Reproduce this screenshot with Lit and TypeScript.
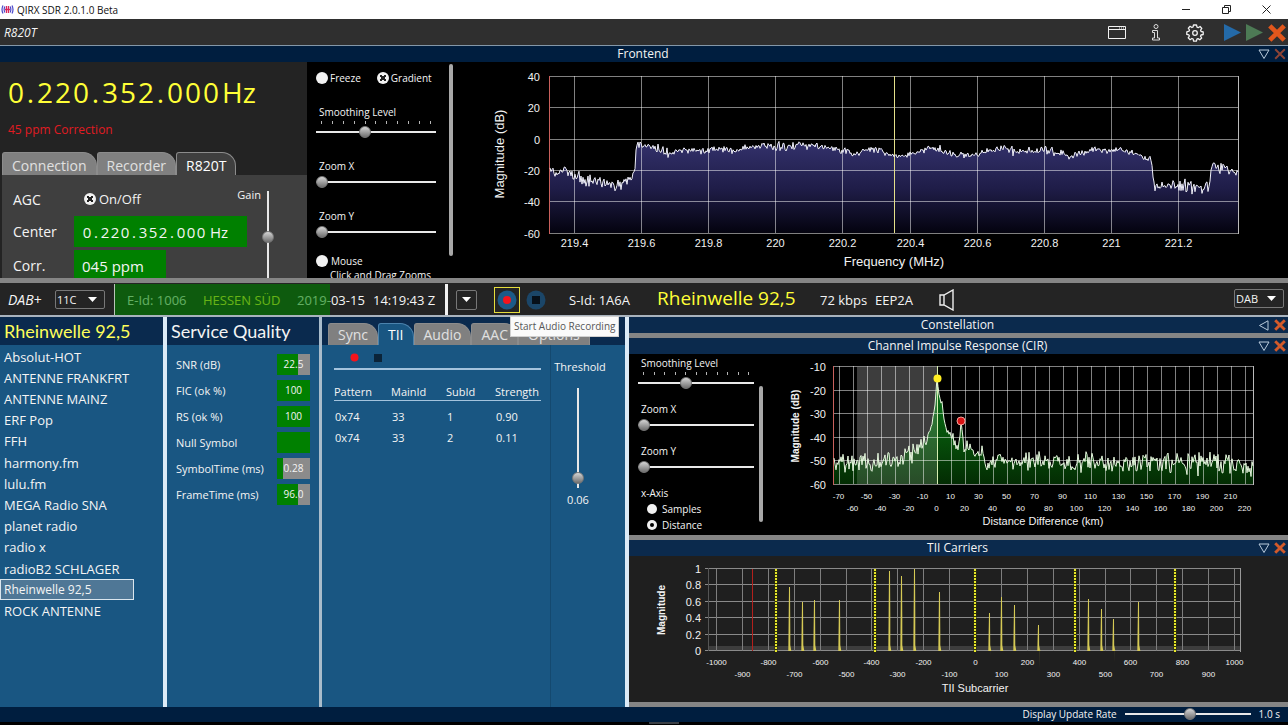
import { LitElement, html, svg, css } from "lit";
import { customElement, property, state } from "lit/decorators.js";
import { classMap } from "lit/directives/class-map.js";
import { styleMap } from "lit/directives/style-map.js";

type Point = [number, number];

/* Small deterministic generator, so that the noise floor is stable between renders. */
function random(seed: number) {
  let s = seed;
  return () => {
    s = (s * 1664525 + 1013904223) % 4294967296;
    return s / 4294967296;
  };
}

/* Walks the envelope one step at a time and adds noise: each key is [x, y, noise]. */
function trace(keys: [number, number, number][], seed: number, step: number): string {
  const rnd = random(seed);
  const out: string[] = [];
  for (let i = 0; i < keys.length - 1; i++) {
    const [x0, y0, n0] = keys[i];
    const [x1, y1] = keys[i + 1];
    for (let x = x0; x < x1; x += step) {
      const y = y0 + ((y1 - y0) * (x - x0)) / (x1 - x0);
      out.push(`${x.toFixed(1)} ${(y + (rnd() + rnd() - 1) * n0 * 1.4).toFixed(1)}`);
    }
  }
  const last = keys[keys.length - 1];
  out.push(`${last[0]} ${last[1]}`);
  return out.join("L");
}

const chartStyles = css`
  :host { display: block; min-width: 0; min-height: 0; }
  svg { display: block; width: 100%; height: 100%; }
  text { font-family: "Liberation Sans", Arial, sans-serif; fill: #f2f2f2; }
  .y { font-size: 11px; text-anchor: end; }
  .x { font-size: 11px; text-anchor: middle; }
  .small { font-size: 8px; text-anchor: middle; }
  .title { font-size: 13px; text-anchor: middle; }
  .subtitle { font-size: 11px; text-anchor: middle; }
  .strong { font-size: 10px; font-weight: bold; text-anchor: middle; }
`;

@customElement("spectrum-chart")
class SpectrumChart extends LitElement {
  static styles = chartStyles;

  render() {
    const curve = trace(
      [
        [95, 105, 4], [99, 111, 5], [110, 108, 5], [120, 115, 6], [135, 119, 6], [150, 120, 5],
        [158, 120, 5], [162, 127, 6], [170, 120, 5], [177, 116, 4], [180, 107, 1], [181, 88, 0], [182, 82, 3],
        [190, 84, 3], [200, 86, 4], [209, 89, 5], [215, 91, 3], [225, 88, 3], [245, 89, 3], [265, 87, 3],
        [280, 89, 4], [290, 86, 3], [315, 84, 4], [335, 84, 4], [355, 83, 3], [375, 86, 3], [390, 89, 3],
        [400, 93, 4], [410, 88, 3], [425, 89, 3], [435, 93, 3], [450, 94, 4], [460, 92, 3], [467, 88, 3],
        [477, 86, 3], [490, 88, 3], [500, 93, 3], [515, 94, 4], [530, 90, 3], [545, 87, 4], [560, 90, 4],
        [575, 89, 3], [590, 88, 4], [605, 91, 3], [615, 95, 3], [625, 92, 3], [640, 88, 3], [670, 89, 3],
        [685, 92, 3], [690, 97, 4], [695, 94, 3], [697, 103, 1], [698, 115, 0], [700, 125, 5],
        [720, 124, 6], [754, 126, 4], [756, 108, 0], [759, 98, 5], [763, 106, 5], [775, 108, 5], [783, 110, 0],
      ],
      7, 1,
    );
    const db = [40, 20, 0, -20, -40, -60];
    const mhz = ["219.4", "219.6", "219.8", "220", "220.2", "220.4", "220.6", "220.8", "221", "221.2"];
    return html`<svg viewBox="0 0 833 216" role="img" aria-label="Frontend spectrum">
      <defs>
        <linearGradient id="fill" gradientUnits="userSpaceOnUse" x1="0" y1="82" x2="0" y2="171">
          <stop offset="0" stop-color="#32306a" /><stop offset="0.5" stop-color="#1f1d48" /><stop offset="1" stop-color="#04030f" />
        </linearGradient>
      </defs>
      <path d="M${curve}L783 171L95 171Z" fill="url(#fill)" />
      ${db.map((v, i) => {
        const y = 14.5 + Math.round(i * 31.3);
        return svg`<path d="M95 ${y}H783" stroke="#fff" stroke-opacity=".5" />
          <text class="y" x="85" y=${y + 4}>${v}</text>`;
      })}
      ${mhz.map((v, i) => {
        const x = 119.5 + Math.round(i * 67.1);
        return svg`<path d="M${x} 14V171" stroke="#fff" stroke-opacity=".5" />
          <text class="x" x=${x} y="185">${v}</text>`;
      })}
      <path d="M783.5 14V172" stroke="#bbb" />
      <path d="M94.5 14V172" stroke="#c9605c" />
      <path d="M439.5 14V171" stroke="#e4e08a" />
      <path d="M${curve}" fill="none" stroke="#f0f0fa" stroke-width="1" />
      <text class="title" x="439" y="204">Frequency (MHz)</text>
      <text class="title" transform="translate(49 92) rotate(-90)">Magnitude (dB)</text>
    </svg>`;
  }
}

@customElement("cir-chart")
class CirChart extends LitElement {
  static styles = chartStyles;

  render() {
    const curve = trace(
      [
        [69, 109, 9], [105, 110, 9], [125, 106, 9], [148, 99, 7], [157, 91, 5], [163, 81, 3], [167, 70, 1],
        [170, 51, 0], [172, 24, 0], [174, 41, 1], [175, 47, 3], [177, 49, 2], [179, 66, 2], [182, 78, 3], [188, 84, 4],
        [193, 94, 2], [195, 82, 0], [196, 67, 0], [198, 84, 0], [199, 99, 3], [202, 91, 4], [212, 102, 6],
        [218, 98, 2], [221, 114, 4], [226, 107, 8], [310, 109, 9], [400, 108, 10], [460, 109, 9], [488, 112, 0],
      ],
      23, 1,
    );
    const db = [-10, -20, -30, -40, -50, -60];
    const km = Array.from({ length: 30 }, (_, i) => (i - 7) * 10);
    return html`<svg viewBox="0 0 523 181" role="img" aria-label="Channel impulse response">
      <defs>
        <linearGradient id="green" gradientUnits="userSpaceOnUse" x1="0" y1="24" x2="0" y2="130">
          <stop offset="0" stop-color="#08761a" /><stop offset="0.6" stop-color="#064d0a" /><stop offset="1" stop-color="#032c03" />
        </linearGradient>
      </defs>
      <rect x="92" y="13" width="80" height="117" fill="#1c1c1c" />
      <path d="M${curve}L488 130L69 130Z" fill="url(#green)" />
      <rect x="92" y="13" width="80" height="117" fill="#fff" fill-opacity=".15" />
      ${db.map((v, i) => {
        const y = 12.5 + Math.round(i * 23.5);
        return svg`<path d="M69 ${y}H488" stroke="#fff" stroke-opacity=".5" />
          <text class="y" x="61" y=${y + 4}>${v}</text>`;
      })}
      ${km.map((v, i) => {
        const x = 74.5 + i * 14;
        return svg`<path d="M${x} 12V130" stroke="#fff" stroke-opacity=".5" />
          <text class="small" x=${x - 1} y=${i % 2 ? 157 : 145}>${v}</text>`;
      })}
      <path d="M172.5 12V130" stroke="#d5ecb0" />
      <path d="M488.5 12V131" stroke="#bbb" />
      <path d="M68.5 12V131" stroke="#c9605c" />
      <path d="M${curve}" fill="none" stroke="#e6f7de" />
      <circle cx="172.5" cy="24.500" r="4" fill="#ffee22" />
      <circle cx="196" cy="67" r="4" fill="#d81313" stroke="#f1a19a" />
      <text class="subtitle" x="278" y="171">Distance Difference (km)</text>
      <text class="strong" transform="translate(34 72) rotate(-90)">Magnitude (dB)</text>
    </svg>`;
  }
}

@customElement("tii-chart")
class TiiChart extends LitElement {
  static styles = chartStyles;

  private readonly carriers: Point[] = [
    [160, 31], [173, 46], [185, 44], [210, 44], [260, 15], [272, 20], [285, 13], [310, 36],
    [360, 57], [372, 41], [385, 49], [409, 69], [459, 43], [472, 53], [484, 63], [509, 46],
  ];

  render() {
    const labels = Array.from({ length: 21 }, (_, i) => (i - 10) * 100);
    return html`<svg viewBox="0 0 659 146" role="img" aria-label="TII carriers">
      <rect x="80" y="90" width="532" height="5" fill="#3d3d3d" />
      ${["1", "0.8", "0.6", "0.4", "0.2", "0"].map((v, i) => {
        const y = 12.5 + Math.round(i * 16.4);
        return svg`<path d="M76 ${y}H612" stroke="#8a8a8a" />
          <text class="y" x="72" y=${y + 4}>${v}</text>`;
      })}
      ${labels.map((v, i) => {
        const x = Math.round(i * 25.9) + 87.5;
        return svg`<path d="M${x} 13V95" stroke="#7e7e7e" />
          <text class="small" x=${x} y=${i % 2 ? 121 : 109}>${v}</text>`;
      })}
      <path d="M79.500 12V95" stroke="#555" />
      <path d="M611.5 12V96" stroke="#999" />
      <path d="M123.5 13V95" stroke="#b3201c" />
      ${[147, 246, 346, 446, 546].map(
        (x) => svg`<path d="M${x} 13V96" stroke="#2f3207" stroke-width="3" />
          <path d="M${x} 13V96" stroke="#e8e82a" stroke-width="2" stroke-dasharray="2 1" />`,
      )}
      ${this.carriers.map(
        ([x, y]) => svg`<path d="M${x} ${y}h1l.3 44V89l1 6h-3z" fill="#d5c955" />
          <path d="M${x + 0.5} ${y}V95" stroke="#d5c955" />`,
      )}
      <text class="subtitle" x="346" y="136">TII Subcarrier</text>
      <text class="strong" transform="translate(36 54) rotate(-90)">Magnitude</text>
    </svg>`;
  }
}

const controlStyles = css`
  * { box-sizing: border-box; }
  button, select, input { font: inherit; color: inherit; margin: 0; }
  button { border: 0; padding: 0; background: none; display: flex; align-items: center; justify-content: center; }
  svg { display: block; flex: none; }
  input[type="range"] {
    appearance: none; display: block; width: 100%; height: 12px;
    background: linear-gradient(#e8e8e8, #e8e8e8) center / 100% 2px no-repeat;
  }
  input[type="range"]::-webkit-slider-runnable-track { height: 12px; }
  input[type="range"]::-webkit-slider-thumb {
    appearance: none; width: 12px; height: 12px; border-radius: 50%;
    background: linear-gradient(#d4d4d4, #6f6f6f); border: 1px solid #777;
  }
  input.vertical[type="range"] {
    writing-mode: vertical-lr; direction: rtl; width: 12px; height: 100%;
    background: linear-gradient(#e8e8e8, #e8e8e8) center / 2px 100% no-repeat;
  }
  input.vertical[type="range"]::-webkit-slider-runnable-track { width: 12px; height: 100%; }
  input[type="checkbox"], input[type="radio"] {
    appearance: none; flex: none; width: 12px; height: 12px; border-radius: 50%; background: #f1f1f1;
    display: grid; place-items: center;
  }
  input[type="checkbox"]:checked::after {
    content: ""; width: 6px; height: 6px;
    background: linear-gradient(45deg, transparent 38%, #222 38% 62%, transparent 62%),
      linear-gradient(-45deg, transparent 38%, #222 38% 62%, transparent 62%);
  }
  input[type="radio"] { width: 10px; height: 10px; }
  input[type="radio"]:checked::after { content: ""; width: 4px; height: 4px; border-radius: 50%; background: #000; }
`;

/* Labelled slider of the chart side panels, with an optional row of ticks. */
@customElement("slider-field")
class SliderField extends LitElement {
  static styles = [
    controlStyles,
    css`
      :host { display: block; }
      label { display: block; line-height: 16px; padding-left: 3px; }
      .ticks { display: flex; justify-content: space-between; height: 6px; padding: 1px 5px 2px; }
      .ticks span { width: 1px; background: #b5b5b5; }
      .gap { height: 2px; }
    `,
  ];
  @property() label = "";
  @property({ type: Number }) value = 0;
  @property({ type: Boolean }) ticks = false;

  render() {
    return html`<label for="range">${this.label}</label>
      ${this.ticks
        ? html`<div class="ticks">${Array.from({ length: 11 }, () => html`<span></span>`)}</div>`
        : html`<div class="gap"></div>`}
      <input id="range" type="range" min="0" max="10" .value=${String(this.value)} />`;
  }
}

@customElement("app-root")
class AppRoot extends LitElement {
  static styles = [
    controlStyles,
    css`
      :host {
        display: flex; flex-direction: column; height: 100vh; overflow: hidden; background: #000;
        font-family: "Open Sans", "Noto Sans", sans-serif; font-size: 13px; color: #f4f4f4;
      }
      .titlebar {
        display: flex; align-items: center; gap: 3px; height: 19px; flex: none; background: #fff; color: #111;
        font-size: 10px; padding: 0 17px 0 1px;
      }
      .titlebar .name { flex: 1; }
      .window { display: flex; gap: 31px; }
      .toolbar {
        display: flex; align-items: center; height: 27px; flex: none; background: #2f2f2f;
        border-bottom: 1px solid #8497a8; padding: 1px 2px 0 4px; font-size: 12px;
      }
      .toolbar .device { flex: 1; font-style: italic; }
      .tools { display: flex; align-items: center; gap: 22px; }
      .runs { display: flex; align-items: center; gap: 5px; margin-left: 20px; }

      .head {
        display: grid; grid-template-columns: 1fr auto 1fr; align-items: center; flex: none; height: 16px;
        background: #0b2a4d; font-size: 12px; padding-right: 2px;
      }
      .head.top { background: #001e3f; }
      .head h2 { grid-column: 2; margin: 0; font-size: 12px; font-weight: 400; line-height: 16px; }
      .head .acts { display: flex; justify-content: flex-end; gap: 4px; }

      .frontend { display: flex; flex: 216 1 0; min-height: 0; overflow: hidden; }
      .tuner { flex: none; width: 307px; background: #232323; display: flex; flex-direction: column; overflow: hidden; }
      .freq { display: flex; padding: 9px 0 0 7px; font-size: 28px; line-height: 42px; color: #ffff37; }
      .freq span { width: 18px; text-align: center; }
      .freq .dot { width: 11px; }
      .freq .unit { width: auto; margin-left: 2px; }
      .ppm { color: #e01b22; font-size: 12px; line-height: 18px; margin: 8px 0 13px 8px; }
      .tabs { display: flex; flex: none; }
      .tab {
        height: 23px; background: #808080; color: #e0e0e0; border-radius: 3px 14px 0 0; font-size: 14px;
        border: 1px solid #8c8c8c; border-bottom: 0; padding: 2px 9px 0;
      }
      .tuner .tabs { padding-left: 2px; }
      .tuner .tab { border-radius: 3px 14px 0 0; }
      .tuner .tab.on { background: #3f3f3f; color: #fff; }
      .tune {
        flex: 1; margin-left: 2px; background: #3f3f3f; padding: 10px 0 0 11px; overflow: hidden; font-size: 14px;
        display: grid; grid-template-columns: 61px 173px 42px; grid-template-rows: 28px 31px 31px; row-gap: 3px; align-items: center;
      }
      .check { display: flex; align-items: center; gap: 3px; }
      .agc { font-size: 13px; padding-left: 10px; grid-column: 2; grid-row: 1; }
      .gain { grid-column: 2 / 4; grid-row: 1; justify-self: end; margin-right: 28px; font-size: 11px; align-self: start; line-height: 20px; }
      .gainslide { grid-column: 3; grid-row: 1 / 4; justify-self: center; height: 94px; margin-top: 6px; align-self: start; }
      .green { background: #008000; height: 31px; display: flex; align-items: center; padding: 0 8px; font-size: 15px; }
      .green span { width: 10px; text-align: center; }
      .green .dot { width: 8px; }
      .green .unit { width: auto; margin-left: 4px; }
      input.green { width: 92px; border: 0; border-radius: 0; outline: 0; }

      .side { display: flex; flex: none; width: 148px; font-size: 10px; padding-left: 9px; overflow: hidden; }
      .side .fields { flex: none; width: 120px; padding-top: 8px; }
      .pair { display: flex; gap: 16px; height: 16px; margin-bottom: 18px; white-space: nowrap; }
      .pair .check { gap: 2px; }
      .side slider-field { margin-bottom: 20px; }
      .hint { line-height: 14px; padding-left: 14px; white-space: nowrap; }
      .side .last { margin-bottom: 16px; }
      .thumb { width: 4px; height: 89%; margin: 2px 0 0 13px; border-radius: 2px; background: #a8a8a8; }
      spectrum-chart, cir-chart, tii-chart { flex: 1; }
      .split { flex: none; height: 5px; background: #858585; }

      .dab { display: flex; flex: none; height: 34px; background: #242424; border-bottom: 2px solid #a9b3bd; align-items: center; padding-top: 1px; }
      .mode { font-style: italic; font-size: 14px; width: 47px; padding-left: 8px; box-sizing: content-box; }
      .pick { position: relative; font-size: 11px; }
      .pick select { appearance: none; display: block; width: 50px; height: 19px; background: transparent; border: 1px solid #777; border-radius: 2px; padding: 0 1px; outline: 0; }
      .pick svg { position: absolute; right: 8px; top: 7px; pointer-events: none; }
      .mode + .pick { margin-right: 9px; }
      .ensemble {
        position: relative; display: flex; align-items: center; width: 334px; align-self: stretch;
        border-left: 1px solid #b9c4b9; border-right: 3px solid #f2f2f2; padding-left: 12px; white-space: nowrap;
      }
      .ensemble .label { width: 76px; }
      .ensemble .mux { width: 94px; color: #ffff37; }
      .ensemble .date { width: 76px; }
      .level { position: absolute; left: 0; top: 0; bottom: 0; background: rgb(0 128 0 / 0.6); }
      .drop { width: 21px; height: 20px; border: 1px solid #777; border-radius: 2px; margin-left: 8px; }
      .rec { position: relative; width: 26px; height: 26px; border: 1px solid #e6de3c; margin-left: 17px; }
      .tip {
        position: absolute; left: 15px; top: 28px; z-index: 3; background: #fafafa; border: 1px solid #d0d0d0; color: #575757;
        font-size: 10px; line-height: 19px; padding: 0 3px; white-space: nowrap;
      }
      .stop { margin: 0 23px 0 6px; }
      .sid { width: 88px; }
      .now { width: 163px; font-size: 19px; line-height: 30px; color: #ffff37; padding-bottom: 4px; }
      .rate { width: 55px; }
      .prot { width: 64px; }
      .grow { flex: 1; }
      .dab .pick.out { margin: 0 4px 3px 0; }

      .main { flex: 390 1 0; min-height: 0; display: grid; grid-template-columns: 167fr 155fr 307fr 659fr; background: #195682; }
      .col { min-width: 0; min-height: 0; display: flex; flex-direction: column; border-right: 4px solid #dcebf7; }
      .col.quality { border-right: 3px solid #a9bccb; }
      .col.right { border: 0; background: #000; }
      .col h1 {
        margin: 0; height: 28px; flex: none; background: #0a2a4e; padding-left: 4px; font: 400 18px/28px Lato, sans-serif; white-space: nowrap;
      }
      .col h1.station { color: #ffff5a; }
      .stations { list-style: none; margin: 0; padding: 1px 0 0; }
      .stations button { width: 134px; height: 21px; padding: 0 3px; justify-content: flex-start; border: 1px solid transparent; white-space: nowrap; }
      .stations li:nth-child(5n) { margin-bottom: 1px; }
      .stations .on button { background: #4f7796; border-color: #dbe6ee; font-size: 12px; }
      .bars { padding: 6px 9px 0 9px; font-size: 11px; }
      .bar { display: flex; height: 26px; align-items: center; justify-content: space-between; }
      .meter { position: relative; width: 33px; height: 21px; background: #8b8b8b; }
      .meter i { display: block; height: 100%; background: #008000; }
      .meter b { position: absolute; inset: 0; font-weight: 400; font-size: 10px; line-height: 21px; text-align: center; }

      .pages { background: #0a2a4e; height: 28px; flex: none; padding: 6px 0 0 6px; }
      .pages .tab { height: 22px; padding: 0 9px; }
      .pages .tab.on { background: #195682; color: #fff; border-color: #4b83ad; }
      .tii { flex: 1; display: flex; min-height: 0; font-size: 11px; }
      .ids { flex: 1; padding: 6px 9px 0 12px; border-right: 1px solid #14496f; }
      .cmds { display: flex; gap: 14px; height: 17px; padding: 1px 0 0 15px; align-items: flex-start; }
      .rule { height: 2px; background: #a4c3dd; margin-bottom: 13px; }
      table { width: 100%; border-collapse: collapse; table-layout: fixed; text-align: left; }
      th { font-weight: 400; padding: 0; line-height: 17px; border-bottom: 1px solid #a4c3dd; }
      td { padding: 0 1px; line-height: 21px; }
      tbody::before { content: ""; display: block; height: 5px; }
      .w1 { width: 57px; } .w2 { width: 55px; } .w3 { width: 49px; }
      .threshold { width: 74px; padding: 12px 0 0; display: flex; flex-direction: column; align-items: center; }
      .threshold label { line-height: 20px; margin-right: 16px; }
      .threshold .slot { height: 100px; margin: 11px 20px 2px 0; }
      .threshold output { margin-right: 20px; line-height: 20px; }

      .body { display: flex; min-height: 0; overflow: hidden; }
      .cir { flex: 181 1 0; }
      .cir .side { width: 136px; }
      .cir .fields { width: 116px; padding-top: 1px; }
      .cir slider-field { margin-bottom: 12px; }
      .cir .thumb { margin: 32px 0 0 5px; height: 75%; }
      .axis { border: 0; margin: 0; padding: 0 0 0 3px; min-width: 0; }
      .axis legend { padding: 0; line-height: 16px; }
      .axis .check { height: 16px; gap: 5px; padding-left: 6px; }
      .carriers { flex: 146 1 0; background: #1f1f1f; }
      .footer { display: flex; flex: none; height: 15px; align-items: center; justify-content: flex-end; gap: 8px; background: #001e3f; font-size: 10px; line-height: 14px; padding: 0 8px 1px 0; }
      .footer input[type="range"] { width: 126px; }
      .edge { flex: none; height: 3px; background: #000; }
      .edge span { display: block; width: 30px; height: 2px; margin: 0 auto; position: relative; left: 20px; background: #3a3f45; }
    `,
  ];

  @state() private station = "Rheinwelle 92,5";
  @state() private page = "TII";

  private readonly stations = [
    "Absolut-HOT", "ANTENNE FRANKFRT", "ANTENNE MAINZ", "ERF Pop", "FFH", "harmony.fm", "lulu.fm",
    "MEGA Radio SNA", "planet radio", "radio x", "radioB2 SCHLAGER", "Rheinwelle 92,5", "ROCK ANTENNE",
  ];
  private readonly quality: [string, string, number][] = [
    ["SNR (dB)", "22.5", 64], ["FIC (ok %)", "100", 100], ["RS (ok %)", "100", 100],
    ["Null Symbol", "", 100], ["SymbolTime (ms)", "0.28", 18], ["FrameTime (ms)", "96.0", 64],
  ];

  private digits() {
    return html`${[..."0.220.352.000"].map((c) => html`<span class=${c === "." ? "dot" : ""}>${c}</span>`)}<span class="unit">Hz</span>`;
  }

  private cross(size: number, color: string, width: number) {
    return html`<svg width=${size} height=${size} viewBox="0 0 10 10"><path d="M1 1L9 9M9 1L1 9" stroke=${color} stroke-width=${width} /></svg>`;
  }

  private head(title: string, folded = false, top = false) {
    return html`<div class=${classMap({ head: true, top })}>
      <h2>${title}</h2>
      <div class="acts">
        <button aria-label="Fold ${title}">
          <svg width="12" height="11" viewBox="0 0 12 11">
            <path d=${folded ? "M10 .8V10.200L1.500 5.500Z" : "M1 1H11L6 9.500Z"} fill="none" stroke="#b9cbdc" />
          </svg>
        </button>
        <button aria-label="Close ${title}">${this.cross(12, top ? "#8d4436" : "#d25a2a", top ? 1.6 : 2.4)}</button>
      </div>
    </div>`;
  }

  private arrow() {
    return html`<svg width="9" height="5" viewBox="0 0 9 5"><path d="M0 0H9L4.500 5Z" fill="#fff" /></svg>`;
  }

  render() {
    return html`
      <header class="titlebar">
        <svg width="13" height="11" viewBox="0 0 13 11" fill="none">
          <path d="M2 1.500Q0 5.500 2 9.500M11 1.500Q13 5.500 11 9.500M3.800 2.500Q2.500 5.500 3.800 8.500M9.200 2.500Q10.500 5.500 9.200 8.500" stroke="#4b47c9" stroke-width="1.200" />
          <path d="M5.500 2V9M7.500 2V9M4 5.500H9" stroke="#d8265c" stroke-width="1.300" />
        </svg>
        <span class="name">QIRX SDR 2.0.1.0 Beta</span>
        <div class="window">
          <button aria-label="Minimize"><svg width="9" height="9"><path d="M0 4.500H8" stroke="#222" /></svg></button>
          <button aria-label="Restore"><svg width="9" height="9" fill="none" stroke="#222"><path d="M.5 2.500H6.500V8.500H.5ZM2.500 2.500V.5H8.500V6.500H6.500" /></svg></button>
          <button aria-label="Close"><svg width="9" height="9"><path d="M.5 .5L8.500 8.500M8.500 .5L.5 8.500" stroke="#222" /></svg></button>
        </div>
      </header>
      <div class="toolbar">
        <span class="device">R820T</span>
        <div class="tools">
          <button aria-label="Windows">
            <svg width="18" height="13" fill="none" stroke="#f2f2f2"><path d="M.5 .5H17.500V12.500H.5ZM.5 3.500H17.500" /><path d="M11 2H12M13 2H14M15 2H16" /></svg>
          </button>
          <button aria-label="Information">
            <svg width="16" height="17" viewBox="0 0 16 17" fill="none" stroke="#dcdcdc">
              <circle cx="8" cy="2.500" r="2" /><path d="M4.500 6.500H9.500V14H11.500V16H4.500V14H6.500V8.500H4.500Z" />
            </svg>
          </button>
          <button aria-label="Settings">
            <svg width="18" height="18" viewBox="0 0 18 18" fill="none" stroke="#f2f2f2" stroke-width="1.300" stroke-linejoin="round">
              <path d="M7.500 1H10.500L11 3.200L12.200 3.700L14.100 2.500L15.800 4.500L14.600 6.200L15.100 7.500L17.200 7.900V10.500L15 11L14.500 12.200L15.700 14L13.800 15.800L12 14.600L10.900 15.100L10.400 17.200H7.600L7.100 15L5.900 14.500L4.100 15.700L2.200 13.800L3.400 12L2.900 10.900L.8 10.400V7.800L3 7.200L3.500 6L2.300 4.200L4.100 2.300L5.900 3.500L7 3Z" />
              <circle cx="9" cy="9" r="2.300" />
            </svg>
          </button>
        </div>
        <div class="runs">
          <button aria-label="Start"><svg width="17" height="17"><path d="M0 0L17 8.500L0 17Z" fill="#246aa8" /></svg></button>
          <button aria-label="Play"><svg width="17" height="17"><path d="M0 0L17 8.500L0 17Z" fill="#4d7a55" /></svg></button>
          <button aria-label="Stop">${this.cross(18, "#e2571c", 2.6)}</button>
        </div>
      </div>
      ${this.head("Frontend", false, true)}
      <section class="frontend">
        <div class="tuner">
          <div class="freq">${this.digits()}</div>
          <div class="ppm">45 ppm Correction</div>
          <div class="tabs" role="tablist">
            <button class="tab" role="tab">Connection</button>
            <button class="tab" role="tab">Recorder</button>
            <button class="tab on" role="tab" aria-selected="true">R820T</button>
          </div>
          <div class="tune">
            <span>AGC</span>
            <label class="check agc"><input type="checkbox" checked />On/Off</label>
            <label class="gain" for="gain">Gain</label>
            <div class="gainslide"><input class="vertical" id="gain" type="range" value="51" /></div>
            <span>Center</span>
            <div class="green">${this.digits()}</div>
            <label for="corr">Corr.</label>
            <input class="green" id="corr" type="text" value="045 ppm" />
          </div>
        </div>
        <div class="side">
          <div class="fields">
            <div class="pair">
              <label class="check"><input type="checkbox" />Freeze</label>
              <label class="check"><input type="checkbox" checked />Gradient</label>
            </div>
            <slider-field label="Smoothing Level" value="4" ticks></slider-field>
            <slider-field label="Zoom X"></slider-field>
            <slider-field class="last" label="Zoom Y"></slider-field>
            <label class="check"><input type="checkbox" />Mouse</label>
            <div class="hint">Click and Drag Zooms</div>
          </div>
          <div class="thumb"></div>
        </div>
        <spectrum-chart></spectrum-chart>
      </section>
      <div class="split"></div>
      <div class="dab">
        <span class="mode">DAB+</span>
        <div class="pick"><select aria-label="Channel"><option>11C</option></select>${this.arrow()}</div>
        <div class="ensemble">
          <span class="label">E-Id: 1006</span><span class="mux">HESSEN SÜD</span><span class="date">2019-03-15</span><span>14:19:43 Z</span>
          <div class="level" style=${styleMap({ width: "65%" })}></div>
        </div>
        <button class="drop" aria-label="More">${this.arrow()}</button>
        <button class="rec" aria-label="Start Audio Recording">
          <svg width="20" height="20"><circle cx="10" cy="10" r="9.500" fill="#1c5a88" /><circle cx="10" cy="10" r="4" fill="#f5141c" /></svg>
          <span class="tip">Start Audio Recording</span>
        </button>
        <button class="stop" aria-label="Stop recording">
          <svg width="20" height="20"><circle cx="10" cy="10" r="9.500" fill="#1b4668" /><rect x="6" y="6" width="8" height="8" fill="#071019" /></svg>
        </button>
        <span class="sid">S-Id: 1A6A</span>
        <span class="now">Rheinwelle 92,5</span>
        <span class="rate">72 kbps</span>
        <span class="prot">EEP2A</span>
        <button aria-label="Volume">
          <svg width="16" height="22" viewBox="0 0 16 22" fill="none" stroke="#eee" stroke-width="1.400"><path d="M1 6H5L14 1V21L5 16H1ZM5 6V16" /></svg>
        </button>
        <span class="grow"></span>
        <div class="pick out"><select aria-label="Output"><option>DAB</option></select>${this.arrow()}</div>
      </div>
      <div class="main">
        <section class="col">
          <h1 class="station">${this.station}</h1>
          <ul class="stations">
            ${this.stations.map(
              (s) => html`<li class=${classMap({ on: s === this.station })}><button @click=${() => (this.station = s)}>${s}</button></li>`,
            )}
          </ul>
        </section>
        <section class="col quality">
          <h1>Service Quality</h1>
          <div class="bars">
            ${this.quality.map(
              ([name, value, part]) => html`<div class="bar"><span>${name}</span>
                <div class="meter"><i style=${styleMap({ width: `${part}%` })}></i><b>${value}</b></div></div>`,
            )}
          </div>
        </section>
        <section class="col">
          <div class="tabs pages" role="tablist">
            ${["Sync", "TII", "Audio", "AAC", "Options"].map(
              (t) => html`<button role="tab" class=${classMap({ tab: true, on: t === this.page })} @click=${() => (this.page = t)}>${t}</button>`,
            )}
          </div>
          <div class="tii">
            <div class="ids">
              <div class="cmds">
                <button aria-label="Record TII"><svg width="11" height="11"><circle cx="5.500" cy="5.500" r="4" fill="#f5141c" /></svg></button>
                <button aria-label="Stop TII"><svg width="9" height="11"><rect y="2" width="8" height="8" fill="#0b2439" /></svg></button>
              </div>
              <div class="rule"></div>
              <table>
                <thead><tr><th class="w1">Pattern</th><th class="w2">MainId</th><th class="w3">SubId</th><th>Strength</th></tr></thead>
                <tbody>
                  <tr><td>0x74</td><td>33</td><td>1</td><td>0.90</td></tr>
                  <tr><td>0x74</td><td>33</td><td>2</td><td>0.11</td></tr>
                </tbody>
              </table>
            </div>
            <div class="threshold">
              <label for="threshold">Threshold</label>
              <div class="slot"><input class="vertical" id="threshold" type="range" value="4" /></div>
              <output>0.06</output>
            </div>
          </div>
        </section>
        <section class="col right">
          ${this.head("Constellation", true)}
          <div class="split"></div>
          ${this.head("Channel Impulse Response (CIR)")}
          <div class="body cir">
            <div class="side">
              <div class="fields">
                <slider-field label="Smoothing Level" value="4" ticks></slider-field>
                <slider-field label="Zoom X"></slider-field>
                <slider-field label="Zoom Y"></slider-field>
                <fieldset class="axis">
                  <legend>x-Axis</legend>
                  <label class="check"><input type="radio" name="axis" />Samples</label>
                  <label class="check"><input type="radio" name="axis" checked />Distance</label>
                </fieldset>
              </div>
              <div class="thumb"></div>
            </div>
            <cir-chart></cir-chart>
          </div>
          <div class="split"></div>
          ${this.head("TII Carriers")}
          <div class="body carriers"><tii-chart></tii-chart></div>
          <div class="split"></div>
        </section>
      </div>
      <footer class="footer">
        <label for="update">Display Update Rate</label>
        <input id="update" type="range" value="52" />
        <output>1.0 s</output>
      </footer>
      <div class="edge"><span></span></div>
    `;
  }
}
